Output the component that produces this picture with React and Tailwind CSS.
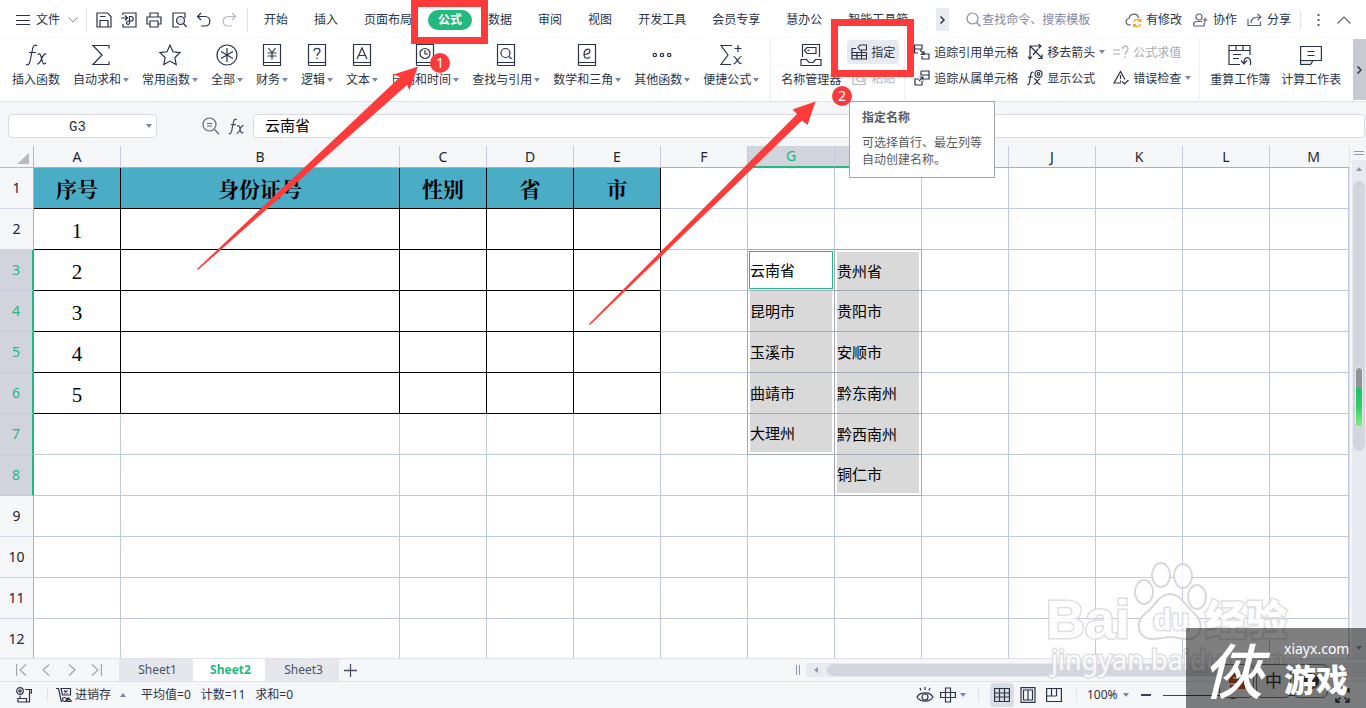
import React from "react";

const ui = "font-['Noto_Sans','Noto_Sans_CJK_SC',sans-serif]";

function Icon({ w = 16, h = 16, sw = 1.2, className = "", children }) {
  return (
    <svg
      width={w}
      height={h}
      viewBox={`0 0 ${w} ${h}`}
      fill="none"
      stroke="currentColor"
      strokeWidth={sw}
      className={`shrink-0 ${className}`}
      aria-hidden="true"
    >
      {children}
    </svg>
  );
}

function Caret({ up = false, className = "text-[#7a86a3]" }) {
  return (
    <svg width="6" height="4" viewBox="0 0 6 4" className={`shrink-0 ${className}`} aria-hidden="true">
      <path d={up ? "M0 4L3 0L6 4Z" : "M0 0H6L3 4Z"} fill="currentColor" />
    </svg>
  );
}

function Divider({ className = "" }) {
  return <div className={`w-px shrink-0 bg-[#dfe1e7] ${className}`} />;
}

const FxGlyph = () => (
  <Icon w={22} h={22} sw={1.2}>
    <path d="M12 2C11 .6 8.500 .6 7.800 4L5 17.500C4.500 20.500 2.500 21.500 1 20.500M4 8.500H11" />
    <path d="M12.500 10.500C14.500 9 15.500 10 16.200 13L17.200 17C17.800 20 19.300 20.500 21 19M21.300 10C19 9.500 17.500 12.500 16.500 15C15.500 17.500 13.500 20.800 12 19.800" />
  </Icon>
);

const Book = ({ children }) => (
  <Icon w={20} h={22} sw={1.2}>
    <path d="M1.500 20V.5H18.500V21.500H2.500C1 21.500 1 18.500 2.500 18.500H18.500" />
    {children}
  </Icon>
);

const bigTools = [
  { label: "插入函数", caret: false, icon: <FxGlyph /> },
  {
    label: "自动求和",
    icon: (
      <Icon w={20} h={22} sw={1.2}>
        <path d="M18 4.500V1.500H2L11 11L2 20.500H18V17.500" />
      </Icon>
    ),
  },
  {
    label: "常用函数",
    icon: (
      <Icon w={22} h={22} sw={1.2}>
        <path d="M11 1.200L14 7.800L21 8.600L15.900 13.500L17.200 20.600L11 17.100L4.800 20.600L6.100 13.500L1 8.600L8 7.800Z" />
      </Icon>
    ),
  },
  {
    label: "全部",
    icon: (
      <Icon w={22} h={22} sw={1.2}>
        <circle cx="11" cy="11" r="10" />
        <path d="M11 4V18M5 7.500L17 14.500M17 7.500L5 14.500" />
      </Icon>
    ),
  },
  {
    label: "财务",
    icon: (
      <Book>
        <path d="M6.500 4L10 8.500L13.500 4M10 8.500V15.500M5.500 9H14.500M5.500 12H14.500" />
      </Book>
    ),
  },
  {
    label: "逻辑",
    icon: (
      <Book>
        <path d="M7 7C7 3.500 13 3.500 13 7C13 9.200 10 9.200 10 12M10 13.500V15" />
      </Book>
    ),
  },
  {
    label: "文本",
    icon: (
      <Book>
        <path d="M5 15L10 4L15 15M6.800 11.500H13.200" />
      </Book>
    ),
  },
  {
    label: "日期和时间",
    icon: (
      <Book>
        <circle cx="10" cy="9.500" r="5" />
        <path d="M10 6V10H13" />
      </Book>
    ),
  },
  {
    label: "查找与引用",
    icon: (
      <Book>
        <circle cx="9.500" cy="9" r="4.500" />
        <path d="M13 12.500L15.500 15" />
      </Book>
    ),
  },
  {
    label: "数学和三角",
    icon: (
      <Book>
        <path d="M7 10.200C10 10.500 13 9.500 13 7C13 4 7 4.500 7 10.500C7 15 11.500 15 13 12.800" />
      </Book>
    ),
  },
  {
    label: "其他函数",
    icon: (
      <Icon w={20} h={22} sw={1.2}>
        <circle cx="2.800" cy="11" r="1.700" />
        <circle cx="10" cy="11" r="1.700" />
        <circle cx="17.200" cy="11" r="1.700" />
      </Icon>
    ),
  },
  {
    label: "便捷公式",
    icon: (
      <Icon w={24} h={22} sw={1.2}>
        <path d="M13 1.500H2L9 11L2 20.500H12M19 1V8M15.500 4.500H22.500" />
        <path d="M14.500 12.500C17 12 19 20.500 22.500 19.500M22.500 12.500C19.500 12.500 17.500 20 14.500 20" />
      </Icon>
    ),
  },
];

function BigTool({ label, icon, caret = true }) {
  return (
    <button type="button" className="flex shrink-0 flex-col items-center gap-[5px] pt-[6px] text-[#2b3347]">
      {icon}
      <span className="flex items-center gap-[2px] text-xs leading-[18px] whitespace-nowrap">
        {label}
        {caret && <Caret />}
      </span>
    </button>
  );
}

function SmallTool({ icon, label, caret, className = "" }) {
  return (
    <button
      type="button"
      className={`flex h-6 shrink-0 items-center gap-1 text-xs whitespace-nowrap ${className || "text-[#2b3347]"}`}
    >
      {icon}
      <span className="pt-px">{label}</span>
      {caret && <Caret />}
    </button>
  );
}

const tabs = ["开始", "插入", "页面布局", "公式", "数据", "审阅", "视图", "开发工具", "会员专享", "慧办公", "智能工具箱"];

function TopBar() {
  return (
    <header className="flex h-[38px] shrink-0 items-center bg-white pt-px text-xs text-[#2b3347]">
      <button type="button" className="ml-4 flex items-center gap-[6px]">
        <Icon w={14} h={12} sw={1}>
          <path d="M0 1.500H14M0 6.500H14M0 10.500H14" />
        </Icon>
        文件
        <Icon w={10} h={6} sw={1} className="ml-[2px] text-[#8a8f9c]">
          <path d="M.5 .5L5 5L9.500 .5" />
        </Icon>
      </button>
      <Divider className="ml-2 h-6" />
      <div className="ml-[9px] flex items-center gap-[9px]">
        <button type="button" aria-label="保存">
          <Icon>
            <path d="M1 15V1H11.500L15 4.500V15ZM4 15V8.500H12V15M4 4.500H9.500" />
          </Icon>
        </button>
        <button type="button" aria-label="输出为PDF">
          <Icon>
            <path d="M2 3V1H15V15H2V12M0 6H6M4 3.500L6.500 6L4 8.500M8.500 11V4.500H10C13 4.500 13 9 10 9H7.500C5 9 5 12.500 7 12.500C8.200 12.500 8.500 12 8.500 11" />
          </Icon>
        </button>
        <button type="button" aria-label="打印">
          <Icon>
            <path d="M4 5V1H12V5M4 12H1V5H15V12H12M4 9H12V15H4Z" />
          </Icon>
        </button>
        <button type="button" aria-label="打印预览">
          <Icon>
            <path d="M8 15H2V1H14V6" />
            <circle cx="9.500" cy="8.500" r="4" fill="#e3e5ea" />
            <path d="M12.500 11.500L15.500 15" />
          </Icon>
        </button>
        <button type="button" aria-label="撤销">
          <Icon w={15}>
            <path d="M5 1L1.500 4.500L5 8M1.500 4.500H9C15.500 4.500 15.500 14 9 14H5" />
          </Icon>
        </button>
        <button type="button" aria-label="恢复" className="ml-[2px] text-[#b3b6be]">
          <Icon w={15}>
            <path d="M10 1L13.500 4.500L10 8M13.500 4.500H6C-.5 4.500 -.5 14 6 14H10" />
          </Icon>
        </button>
      </div>
      <Divider className="ml-[10px] h-6" />
      <nav className="ml-[6px] flex items-center gap-[6px]">
        {tabs.map((t) => (
          <button
            key={t}
            type="button"
            className={
              t === "公式"
                ? "h-5 rounded-full bg-[#22b97f] px-[10px] font-bold whitespace-nowrap text-white"
                : "h-5 px-[10px] whitespace-nowrap"
            }
          >
            {t}
          </button>
        ))}
      </nav>
      <button type="button" aria-label="更多选项卡" className="ml-[18px] flex h-[23px] w-[13px] shrink-0 items-center justify-center bg-[#e8ebef]">
        <Icon w={5} h={8} sw={1.5}>
          <path d="M.5 .5L4 4L.5 7.500" />
        </Icon>
      </button>
      <label className="ml-[17px] flex items-center gap-px">
        <Icon w={15} h={15} sw={1.2} className="text-[#8089a3]">
          <circle cx="6.500" cy="6.500" r="5.500" />
          <path d="M10.500 10.500L14.500 14.500" />
        </Icon>
        <input
          type="text"
          aria-label="查找"
          placeholder="查找命令、搜索模板"
          className="w-28 bg-transparent text-xs outline-none placeholder:text-[#7f88a3]"
        />
      </label>
      <div className="ml-auto flex items-center pr-[15px]">
        <button type="button" className="flex items-center gap-1 whitespace-nowrap">
          <Icon w={17} h={16} className="text-[#5b6275]">
            <path d="M6 13H4.500C-.5 12.500 .5 6.500 4 6.500C5 1 12.500 .5 13.500 6" />
            <path d="M8.500 9.500C9.500 7.500 13.500 6.500 15.500 9M15.800 6.800V9.300H13.300M16 12C15 14.500 11 15.500 9 13M8.700 15.200V12.700H11.200" stroke="#f5a623" strokeWidth="1.400" />
          </Icon>
          有修改
        </button>
        <button type="button" className="ml-[11px] flex items-center gap-[5px] whitespace-nowrap">
          <Icon w={15} h={14} className="text-[#5b6275]">
            <circle cx="6" cy="4" r="3" />
            <path d="M9 8.500H3.500C0 8.500 0 13 1.500 13H10.500C12 13 11.500 10.500 11 10M12 4.500V9.500M9.500 7H14.500" />
          </Icon>
          协作
        </button>
        <button type="button" className="ml-[10px] flex items-center gap-[5px] whitespace-nowrap">
          <Icon w={15} h={14} className="text-[#5b6275]">
            <path d="M1 6V12.500H13.500V8.500M4 10C4 5.500 7 4 13.500 4M10.500 .8L13.800 4L10.500 7.200" />
          </Icon>
          分享
        </button>
        <Divider className="ml-[9px] h-5" />
        <button type="button" aria-label="更多" className="ml-4 text-[#5b6275]">
          <svg width="3" height="12" viewBox="0 0 3 12" fill="currentColor" aria-hidden="true">
            <path d="M.5 0H2.500V2H.5ZM.5 5H2.500V7H.5ZM.5 10H2.500V12H.5Z" />
          </svg>
        </button>
        <button type="button" aria-label="收起功能区" className="ml-[17px] text-[#5b6275]">
          <Icon w={14} h={8}>
            <path d="M.5 7.500L7 1L13.500 7.500" />
          </Icon>
        </button>
      </div>
    </header>
  );
}

function Ribbon() {
  return (
    <section className="flex h-[64px] shrink-0 border-b border-[#e1e3e7] bg-white shadow-sm">
      <div className="ml-[12px] flex items-start gap-[13px]">
        {bigTools.map((t) => (
          <BigTool key={t.label} {...t} />
        ))}
      </div>
      <Divider className="ml-[11px] h-[62px] bg-[#eeeff2]" />
      <div className="ml-[10px]">
        <BigTool
          label="名称管理器"
          caret={false}
          icon={
            <Icon w={22} h={22} sw={1.2}>
              <path d="M2.500 13V.5H19.500V13M1 15.500H6.500L9 18.500H13L15.500 15.500H21V21.500H1Z" />
              <path d="M4.500 6.500L7 3.500H16V9.500H7Z" />
              <path d="M7.500 6.500H9.500" />
            </Icon>
          }
        />
      </div>
      <div className="ml-[6px] flex shrink-0 flex-col gap-[2px] pt-[2px]">
        <SmallTool
          label="指定"
          className="rounded-sm bg-[#e6e9ef] px-1 text-[#2b3347]"
          icon={
            <Icon>
              <path d="M5 4.500H1V15H15.500V8.500M1 8.500H15.500M1 11.500H15.500M6 8.500V15M10.500 6V15" />
              <path d="M7 3.500L9 1H15.500V6H9Z" />
            </Icon>
          }
        />
        <SmallTool
          label="粘贴"
          className="px-1 text-[#b5b7bd]"
          icon={
            <Icon>
              <path d="M4 4H2V14.500H14V8" />
              <path d="M5 9L8 6.500H12V11.500H8Z" />
            </Icon>
          }
        />
      </div>
      <Divider className="ml-[5px] h-[62px] bg-[#eeeff2]" />
      <div className="ml-[9px] flex shrink-0 flex-col gap-[2px] pt-[2px]">
        <SmallTool
          label="追踪引用单元格"
          icon={
            <Icon>
              <path d="M.6 1H8V5H.6ZM.6 5V9H4M10 10H15V15H8V12M6 6L10 10M10 7V10.300H6.500" />
            </Icon>
          }
        />
        <SmallTool
          label="追踪从属单元格"
          icon={
            <Icon>
              <path d="M7 1H15V9H10M7 1V5H15M5 9H1V15H8V11M5 11L9 7M5.500 7H9V10.500" />
            </Icon>
          }
        />
      </div>
      <div className="ml-[9px] flex shrink-0 flex-col gap-[2px] pt-[2px]">
        <SmallTool
          label="移去箭头"
          caret
          icon={
            <Icon>
              <path d="M3 15V2H14M1 12.500L3 15L5 12.500M11.500 0L14 2L11.500 4.500M3 2L15 14M15 10.500V14.500H11M6 11L11 5" />
            </Icon>
          }
        />
        <SmallTool
          label="显示公式"
          icon={
            <Icon>
              <path d="M6.500 2.500C4.500 1 4 3 3.500 6L2.500 12C2 15 1 15 0 14.500M1 7H6M7 9C10 8 10 15 13.500 14.500M13 9C10 9 9.500 15 6.500 14.500" />
              <circle cx="11.500" cy="4" r="3.500" />
              <circle cx="11.500" cy="4" r="1.300" />
            </Icon>
          }
        />
      </div>
      <div className="ml-[8px] flex shrink-0 flex-col gap-[2px] pt-[2px]">
        <SmallTool
          label="公式求值"
          className="text-[#a9abb3]"
          icon={
            <Icon>
              <path d="M0 6H7M0 10H7M9.500 5C9.500 1 15 1 15 4.800C15 7.500 12.200 7.500 12.200 10.500M12.200 12V13.500" />
            </Icon>
          }
        />
        <SmallTool
          label="错误检查"
          caret
          icon={
            <Icon>
              <path d="M8 13H1L7.500 1.500L12 9.500M7.500 5V9M7.500 10.500V12M9 11.500L11.500 14L15.500 10" />
            </Icon>
          }
        />
      </div>
      <Divider className="ml-[8px] h-[62px] bg-[#eeeff2]" />
      <div className="ml-[10px] flex items-start gap-[11px]">
        <BigTool
          label="重算工作簿"
          caret={false}
          icon={
            <Icon w={24} h={22} sw={1.2}>
              <path d="M12 20.500H1V1.500H22V11M1 6.500H22M8 1.500V6.500M15 1.500V6.500M5 10.500H13M5 14.500H11M22.500 21C23.500 11.500 15.500 11.500 16 19M13 16.500L16 19.800L19 16.500" />
            </Icon>
          }
        />
        <BigTool
          label="计算工作表"
          caret={false}
          icon={
            <Icon w={22} h={22} sw={1.2}>
              <path d="M.6 16.500V2.500H21.400V16.500H13M7.500 7.500H14.500M7.500 11.500H14.500" />
              <path d="M.6 16.500H13L10.500 20.500H.6Z" fill="#e3e5ea" />
            </Icon>
          }
        />
      </div>
      <button type="button" aria-label="向右滚动" className="mt-px ml-auto flex h-[61px] w-[13px] shrink-0 items-center justify-center bg-[#c8cad1] text-[#2b3347]">
        <Icon w={5} h={8} sw={1.5}>
          <path d="M.5 .5L4 4L.5 7.500" />
        </Icon>
      </button>
    </section>
  );
}

function FormulaBar() {
  return (
    <section className="flex h-11 shrink-0 items-start bg-[#f5f6f8] pt-3 pr-px">
      <label className="ml-2 flex h-6 w-[149px] shrink-0 items-center rounded-sm border border-[#d8dae0] bg-white pr-1">
        <input
          type="text"
          aria-label="名称框"
          defaultValue="G3"
          className="w-full min-w-0 bg-transparent pt-[2px] text-center font-['Liberation_Mono',monospace] text-sm text-[#333] outline-none"
        />
        <Caret />
      </label>
      <button type="button" aria-label="缩小" className="mt-[3px] ml-[45px] text-[#5b6275]">
        <Icon w={18} h={18}>
          <circle cx="7.500" cy="7.500" r="6.500" />
          <path d="M12.500 12.500L17 17M5 6.500H10M5 9H10" />
        </Icon>
      </button>
      <button type="button" aria-label="插入函数" className="mt-[4px] ml-[8px] text-[#4b5266]">
        <svg width="16" height="17" viewBox="0 0 22 22" fill="none" stroke="currentColor" strokeWidth="1.700" aria-hidden="true">
          <path d="M12 2C11 .6 8.500 .6 7.800 4L5 17.500C4.500 20.500 2.500 21.500 1 20.500M4 8.500H11" />
          <path d="M12.500 10.500C14.500 9 15.500 10 16.200 13L17.200 17C17.800 20 19.300 20.500 21 19M21.300 10C19 9.500 17.500 12.500 16.500 15C15.500 17.500 13.500 20.800 12 19.800" />
        </svg>
      </button>
      <input
        type="text"
        aria-label="编辑栏"
        defaultValue="云南省"
        className="ml-[9px] h-6 min-w-0 flex-1 rounded-sm border border-[#d8dae0] bg-white px-[11px] pb-1 font-['Noto_Sans_CJK_SC',sans-serif] text-[15px] leading-5 text-black outline-none"
      />
    </section>
  );
}

const cols = ["A", "B", "C", "D", "E", "F", "G", "H", "I", "J", "K", "L", "M"];
const headings = { A: "序号", B: "身份证号", C: "性别", D: "省", E: "市" };
const lists = {
  G: { 3: "云南省", 4: "昆明市", 5: "玉溪市", 6: "曲靖市", 7: "大理州" },
  H: { 3: "贵州省", 4: "贵阳市", 5: "安顺市", 6: "黔东南州", 7: "黔西南州", 8: "铜仁市" },
};

function Cell({ col, row }) {
  if ("ABCDE".includes(col) && row <= 6) {
    if (row === 1) {
      return (
        <td className="border-r border-b border-black bg-[#4bacc6] p-0 text-center font-['Noto_Serif_CJK_SC','Noto_Sans_CJK_SC',serif] text-[21px] leading-6 font-bold text-black">
          {headings[col]}
        </td>
      );
    }
    return (
      <td className="border-r border-b border-black p-0 pt-1 text-center font-['Liberation_Serif',serif] text-[21px] leading-6 text-black">
        {col === "A" ? row - 1 : ""}
      </td>
    );
  }
  const text = lists[col] && lists[col][row];
  if (text) {
    const last = col === "G" ? 7 : 8;
    const active = col === "G" && row === 3;
    const edge = active ? "p-px" : row === 3 ? "px-[2px] pt-[2px]" : row === last ? "px-[2px] pb-[2px]" : "px-[2px]";
    return (
      <td className={`h-[41px] border-r border-b border-[#a3a9b9] ${edge}`}>
        <div
          className={`flex h-full items-center font-['Noto_Sans_CJK_SC',sans-serif] text-[15px] leading-5 whitespace-nowrap text-black ${
            active ? "border border-[#22b97f] bg-white" : "bg-[#d9d9d9]"
          }`}
        >
          {text}
        </div>
      </td>
    );
  }
  const right = (col === "F" && row >= 3 && row <= 7) || (col === "G" && row === 8) ? "border-r-[#a3a9b9]" : "border-r-[#c1c7dc]";
  const bottom = (col === "G" || col === "H") && row === 2 ? "border-b-[#a3a9b9]" : "border-b-[#c1c7dc]";
  return <td className={`border-r border-b p-0 ${right} ${bottom}`} />;
}

function Grid() {
  return (
    <main className="flex min-h-0 flex-1 overflow-hidden bg-white">
      <div className="min-w-0 flex-1 overflow-hidden">
        <table className="w-full table-fixed border-separate border-spacing-0 text-sm text-[#1f2430]">
          <colgroup>
            <col className="w-[34px]" />
            {cols.map((c) => (
              <col key={c} className={c === "B" ? "w-[279px]" : c === "M" ? "" : "w-[87px]"} />
            ))}
          </colgroup>
          <thead>
            <tr className="h-[22px] bg-[#f5f6f8]">
              <th className="border-r border-b border-[#b3b9cc] p-0" aria-label="全选">
                <svg width="12" height="11" viewBox="0 0 12 11" className="mt-1 mr-1 ml-auto" aria-hidden="true">
                  <path d="M12 0V11H0Z" fill="#b9bbc0" />
                </svg>
              </th>
              {cols.map((c) => (
                <th
                  key={c}
                  scope="col"
                  className={`p-0 leading-5 font-normal ${
                    c === "G" || c === "H"
                      ? "border-r border-b-2 border-r-[#c6cadb] border-b-[#22b97f] bg-[#d1d4dc] text-[#22b97f]"
                      : c === "M"
                        ? "border-b border-b-[#a9b0c5] pl-2"
                        : "border-r border-b border-r-[#c6cadb] border-b-[#a9b0c5]"
                  }`}
                >
                  {c}
                </th>
              ))}
            </tr>
          </thead>
          <tbody>
            {[1, 2, 3, 4, 5, 6, 7, 8, 9, 10, 11, 12].map((r) => (
              <tr key={r} className="h-[41px]">
                <th
                  scope="row"
                  className={`border-b p-0 font-normal ${
                    r >= 3 && r <= 8
                      ? "border-r-2 border-r-[#22b97f] border-b-[#c6cadb] bg-[#d1d4dc] text-[#22b97f]"
                      : "border-r border-r-[#a9b0c5] border-b-[#d3d7e4] bg-[#f5f6f8]"
                  }`}
                >
                  {r}
                </th>
                {cols.map((c) => (
                  <Cell key={c} col={c} row={r} />
                ))}
              </tr>
            ))}
          </tbody>
        </table>
      </div>
      <div className="flex w-[17px] shrink-0 flex-col border-l border-[#dfe1e7] bg-[#f5f6f8] pl-[2px]">
        <div className="flex h-[14px] flex-col justify-center gap-[2px] px-[2px]">
          <div className="h-px bg-[#8b97b3]" />
          <div className="h-px bg-[#8b97b3]" />
        </div>
        <div className="flex min-h-0 flex-1 flex-col items-center bg-[#e8eaef]">
          <Caret up className="mt-[7px] text-[#8b97b3]" />
          <div className="mt-[10px] flex h-[270px] w-3 items-center justify-center rounded-full bg-[#d3d6df] pt-[161px]">
            <div className="flex h-[60px] w-2 flex-col overflow-hidden rounded-full border border-[#e6e8ec] bg-[#929398] pt-[20px]">
              <div className="flex-1 bg-linear-to-b from-[#20c063] via-[#2bcf6c] to-[#7df07d]" />
            </div>
          </div>
          <Caret className="mt-auto mb-2 text-[#8b97b3]" />
        </div>
      </div>
    </main>
  );
}

function SheetBar() {
  return (
    <section className="flex h-[23px] shrink-0 items-stretch border-t border-[#dfe1e7] bg-[#f5f6f8] text-[#4a5167]">
      <div className="flex w-[119px] shrink-0 items-center gap-[15px] pl-4 text-[#a3a5ab]">
        <button type="button" aria-label="第一张">
          <Icon w={11} h={12}>
            <path d="M.6 0V12M10 .5L4 6L10 11.500" />
          </Icon>
        </button>
        <button type="button" aria-label="上一张">
          <Icon w={8} h={12}>
            <path d="M7 .5L1 6L7 11.500" />
          </Icon>
        </button>
        <button type="button" aria-label="下一张" className="ml-[3px]">
          <Icon w={8} h={12}>
            <path d="M1 .5L7 6L1 11.500" />
          </Icon>
        </button>
        <button type="button" aria-label="最后一张">
          <Icon w={11} h={12}>
            <path d="M1 .5L7 6L1 11.500M10.400 0V12" />
          </Icon>
        </button>
      </div>
      <button type="button" className="w-[74px] shrink-0 bg-[#e6e7ed] pl-[3px] text-xs">Sheet1</button>
      <button type="button" className="w-[72px] shrink-0 bg-white pl-[3px] text-xs font-bold text-[#22b97f]">Sheet2</button>
      <button type="button" className="w-[74px] shrink-0 bg-[#e6e7ed] pl-[3px] text-xs">Sheet3</button>
      <button type="button" aria-label="新建工作表" className="ml-[5px]">
        <Icon w={13} h={13} sw={1.3}>
          <path d="M6.500 0V13M0 6.500H13" />
        </Icon>
      </button>
      <div className="ml-auto flex w-[570px] shrink-0 items-center">
        <div className="h-[10px] w-1 border-x border-[#8b97b3]" />
        <div className="ml-[6px] flex h-[14px] flex-1 items-center bg-[#e8eaef]">
          <svg width="4" height="6" viewBox="0 0 4 6" className="ml-2 text-[#8b97b3]" aria-hidden="true">
            <path d="M4 0V6L0 3Z" fill="currentColor" />
          </svg>
          <div className="mr-[38px] ml-[9px] h-3 flex-1 rounded-full bg-[#d3d6df]" />
        </div>
      </div>
    </section>
  );
}

function StatusBar() {
  return (
    <footer className="flex h-[27px] shrink-0 items-center border-t border-[#dfe1e7] bg-[#f5f6f8] text-xs text-[#2b3347]">
      <button type="button" aria-label="录制" className="ml-4">
        <Icon>
          <circle cx="4" cy="4" r="3.300" />
          <circle cx="4" cy="4" r="1.200" />
          <path d="M9 2.500H15.500V6H13.500M13.500 2.500V15H2V11.500H10.500V15M4 8.500V11.500" />
        </Icon>
      </button>
      <Divider className="ml-[15px] h-[14px]" />
      <button type="button" className="ml-2 flex items-center gap-[3px] whitespace-nowrap">
        <Icon>
          <path d="M0 1.500H2.500L5.500 15M5 1.500H14.500V8H6.500ZM8 3.500L11.500 6.500M11.500 3.500L8 6.500" />
          <circle cx="8.500" cy="12.500" r="2" />
          <path d="M10.500 12.500L12.500 10.500M15.500 14.500H11L13 11.500L15.500 14.500" />
        </Icon>
        进销存
        <Caret up className="ml-[6px] text-[#7a86a3]" />
      </button>
      <div className="ml-[15px] flex gap-[10px] whitespace-nowrap">
        <span>平均值=0</span>
        <span>计数=11</span>
        <span>求和=0</span>
      </div>
      <div className="ml-auto flex w-[450px] shrink-0 items-center pr-4">
        <button type="button" aria-label="护眼模式">
          <Icon w={18} h={16}>
            <path d="M1 10C4 4.500 14 4.500 17 10C14 15.500 4 15.500 1 10ZM9 0V3M4 1L5 3.500M14 1L13 3.500" />
            <circle cx="9" cy="10" r="3" />
          </Icon>
        </button>
        <button type="button" aria-label="阅读模式" className="ml-[6px] flex items-center gap-1">
          <Icon>
            <path d="M5.500 1H10.500V15H5.500ZM.6 5.500H15.400V10.500H.6Z" />
          </Icon>
          <Caret />
        </button>
        <Divider className="ml-3 h-[14px]" />
        <button type="button" aria-label="普通视图" className="ml-[11px] flex h-6 w-6 items-center justify-center rounded-sm bg-[#d9dee6]">
          <Icon>
            <path d="M.6 1.500H15.400V14.500H.6ZM.6 6H15.400M.6 10H15.400M5.500 1.500V14.500M10.500 1.500V14.500" />
          </Icon>
        </button>
        <button type="button" aria-label="页面布局" className="ml-[6px]">
          <Icon>
            <path d="M1 .6H15V15.400H1ZM3.500 3H8V13H3.500ZM8 3H12.500V13H8Z" />
          </Icon>
        </button>
        <button type="button" aria-label="分页预览" className="ml-[10px]">
          <Icon>
            <path d="M.6 1.500H15.400V14.500H.6ZM5.500 1.500V9M10.500 1.500V9M.6 9H10.500" />
          </Icon>
        </button>
        <Divider className="ml-[14px] h-[14px]" />
        <button type="button" className="ml-[10px] flex items-center gap-[5px]">
          100%
          <Caret />
        </button>
        <button type="button" aria-label="缩小显示" className="ml-[12px] flex h-4 items-center">
          <span className="block h-[2px] w-[10px] bg-[#3b435c]" />
        </button>
        <input
          type="range"
          aria-label="显示比例"
          defaultValue="50"
          className="ml-3 h-px w-[140px] appearance-none bg-[#3b435c] [&::-webkit-slider-thumb]:h-2 [&::-webkit-slider-thumb]:w-2 [&::-webkit-slider-thumb]:appearance-none [&::-webkit-slider-thumb]:rounded-full [&::-webkit-slider-thumb]:bg-[#3b435c]"
        />
        <button type="button" aria-label="全屏" className="ml-auto">
          <Icon w={15} h={15} sw={1.4}>
            <path d="M1 5V1H5M1 1L5.500 5.500M10 1H14V5M14 1L9.500 5.500M1 10V14H5M1 14L5.500 9.500M14 10V14H10M14 14L9.500 9.500" />
          </Icon>
        </button>
      </div>
    </footer>
  );
}

function Tooltip() {
  return (
    <div role="tooltip" className="absolute top-[101px] left-[849px] z-10 w-[146px] border border-[#a3a5ab] bg-white px-3 pt-[7px] pb-[9px] text-xs leading-[17px] text-[#595b61]">
      <p className="mb-2 font-bold">指定名称</p>
      <p>可选择首行、最左列等自动创建名称。</p>
    </div>
  );
}

function Annotations() {
  return (
    <div className="pointer-events-none absolute inset-0 z-20 overflow-hidden">
      <div className="absolute top-0 left-[411px] h-11 w-[77px] border-7 border-[#fd3b3b]" />
      <div className="absolute top-[19px] left-[831px] h-[58px] w-[83px] border-7 border-[#fd3b3b]" />
      <svg className="absolute top-0 left-0 h-full w-full" aria-hidden="true">
        <g fill="#fd3b3b">
          <path d="M197 269L400 77L393.500 74.500L418 66.500L409.500 90L407 85L198 270Z" />
          <path d="M589 324L797 114L792.500 109.500L815.500 101.500L807.500 125L802 120.500L590 325Z" />
        </g>
      </svg>
      <div className="absolute top-[53px] left-[430px] flex h-5 w-5 items-center justify-center rounded-full bg-[#f93a3a] text-sm text-white">1</div>
      <div className="absolute top-[86px] left-[832px] flex h-5 w-5 items-center justify-center rounded-full bg-[#f93a3a] text-sm text-white">2</div>
    </div>
  );
}

function Watermark() {
  const outline = "text-white [-webkit-text-stroke:3px_#dadadc] [paint-order:stroke_fill]";
  return (
    <div className="pointer-events-none absolute right-0 bottom-0 z-30 h-[150px] w-[320px] opacity-85" aria-hidden="true">
      <svg className="absolute top-0 left-[80px] h-[90px] w-24" viewBox="0 0 96 90" fill="#ffffff" stroke="#d2d2d5" strokeWidth="2">
        <ellipse cx="35" cy="17" rx="9" ry="12" />
        <ellipse cx="57" cy="18" rx="9" ry="12" />
        <ellipse cx="18" cy="34" rx="9" ry="12" />
        <ellipse cx="71" cy="39" rx="9" ry="12" />
        <path d="M44 36C33 36 30 47 21 54C7 64 12 81 26 81C34 81 38 79 44 79C50 79 54 81 62 81C76 81 79 65 68 55C58 47 55 36 44 36Z" />
      </svg>
      <span className={`absolute top-[32px] left-0 text-[54px] leading-[58px] font-bold font-['Liberation_Sans',sans-serif] ${outline}`}>Bai</span>
      <span className={`absolute top-[46px] left-[107px] text-[30px] leading-[32px] font-bold font-['Liberation_Sans',sans-serif] ${outline}`}>du</span>
      <span className={`absolute top-[36px] left-[159px] text-[41px] leading-[46px] font-black whitespace-nowrap font-['Noto_Sans_CJK_SC',sans-serif] ${outline}`}>经验</span>
      <span className={`absolute top-[84px] left-[5px] text-[27px] leading-[36px] whitespace-nowrap ${outline}`}>jingyan.baidu.com</span>
    </div>
  );
}

function CornerLogo() {
  return (
    <div className="pointer-events-none absolute right-0 bottom-0 z-40 h-20 w-[180px] overflow-hidden">
      <div className="absolute bottom-[10px] left-[33px] flex gap-[2px] text-[17px] text-[#2b2b2b]">
        <span className="flex h-[34px] w-[35px] items-center justify-center rounded-md border border-[#777] bg-[#eee]">
          <svg width="20" height="18" viewBox="0 0 20 18" fill="none" stroke="#d94a1e" strokeWidth="4" aria-hidden="true">
            <path d="M17 3H4V9H16V15H3" />
          </svg>
        </span>
        <span className="flex h-[34px] w-[35px] items-center justify-center rounded-md border border-[#777] bg-[#eee]">中</span>
        <span className="flex h-[34px] w-[35px] items-center justify-center rounded-md border border-[#777] bg-[#eee]">
          <span className="h-4 w-4 rounded-full bg-[#444]" />
        </span>
      </div>
      <div className="absolute inset-0 bg-black/50" />
      <span className="absolute top-[8px] left-[17px] font-['Noto_Sans_CJK_TC',sans-serif] text-[60px] leading-[64px] font-medium text-white italic">俠</span>
      <span className="absolute top-[11px] left-[98px] text-[14px] leading-5 text-white">xiayx.com</span>
      <span className="absolute top-[32px] left-[98px] font-['Noto_Sans_CJK_SC',sans-serif] text-[32px] leading-9 font-black whitespace-nowrap text-white">游戏</span>
    </div>
  );
}

export default function App() {
  return (
    <div lang="zh-CN" className={`relative flex h-screen flex-col overflow-hidden bg-[#f5f6f8] ${ui}`}>
      <TopBar />
      <Ribbon />
      <FormulaBar />
      <Grid />
      <SheetBar />
      <StatusBar />
      <Tooltip />
      <Annotations />
      <Watermark />
      <CornerLogo />
    </div>
  );
}
